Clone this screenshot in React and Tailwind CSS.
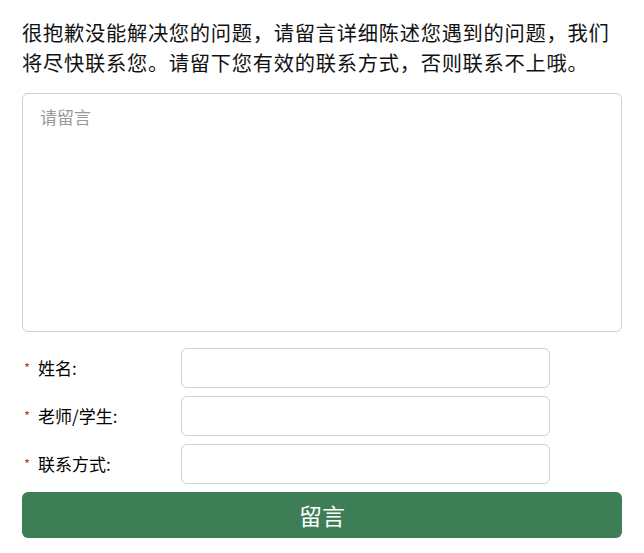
import { useState } from "react";

const FONT = { fontFamily: '"Noto Sans CJK SC", "Noto Sans", sans-serif' };

const FIELDS = ["姓名:", "老师/学生:", "联系方式:"];

export default function App() {
  const [msg, setMsg] = useState("");

  return (
    <main className="min-h-screen bg-white px-[22px] pt-[17px] text-[#111]" style={FONT}>
      <p className="text-[20.3px] leading-[30px] tracking-[0.7px]">
        很抱歉没能解决您的问题，请留言详细陈述您遇到的问题，我们将尽快联系您。请留下您有效的联系方式，否则联系不上哦。
      </p>

      <textarea
        value={msg}
        onChange={(e) => setMsg(e.target.value)}
        placeholder="请留言"
        className="mt-[16px] block h-[239px] w-full resize-none rounded-[6px] border border-[#cfcfcf] px-[17px] py-[10px] text-[17px] leading-[26px] placeholder:text-[#9a9a9a] outline-none"
      />

      <div className="mt-[16px] flex flex-col gap-[8px]">
        {FIELDS.map((label) => (
          <div key={label} className="flex items-center">
            <label className="flex w-[159px] items-center text-[17px] text-black">
              <span className="w-[16px] pl-[2px] text-[13px] text-[#c0392b]">*</span>
              {label}
            </label>
            <input className="h-[40px] w-[369px] rounded-[6px] border border-[#cfcfcf] px-3 text-[16px] outline-none" />
          </div>
        ))}
      </div>

      <button
        type="button"
        className="mt-[8px] flex h-[46px] w-full items-center justify-center rounded-[6px] bg-[#3e7e56] text-[23px] text-white"
      >
        留言
      </button>
    </main>
  );
}
